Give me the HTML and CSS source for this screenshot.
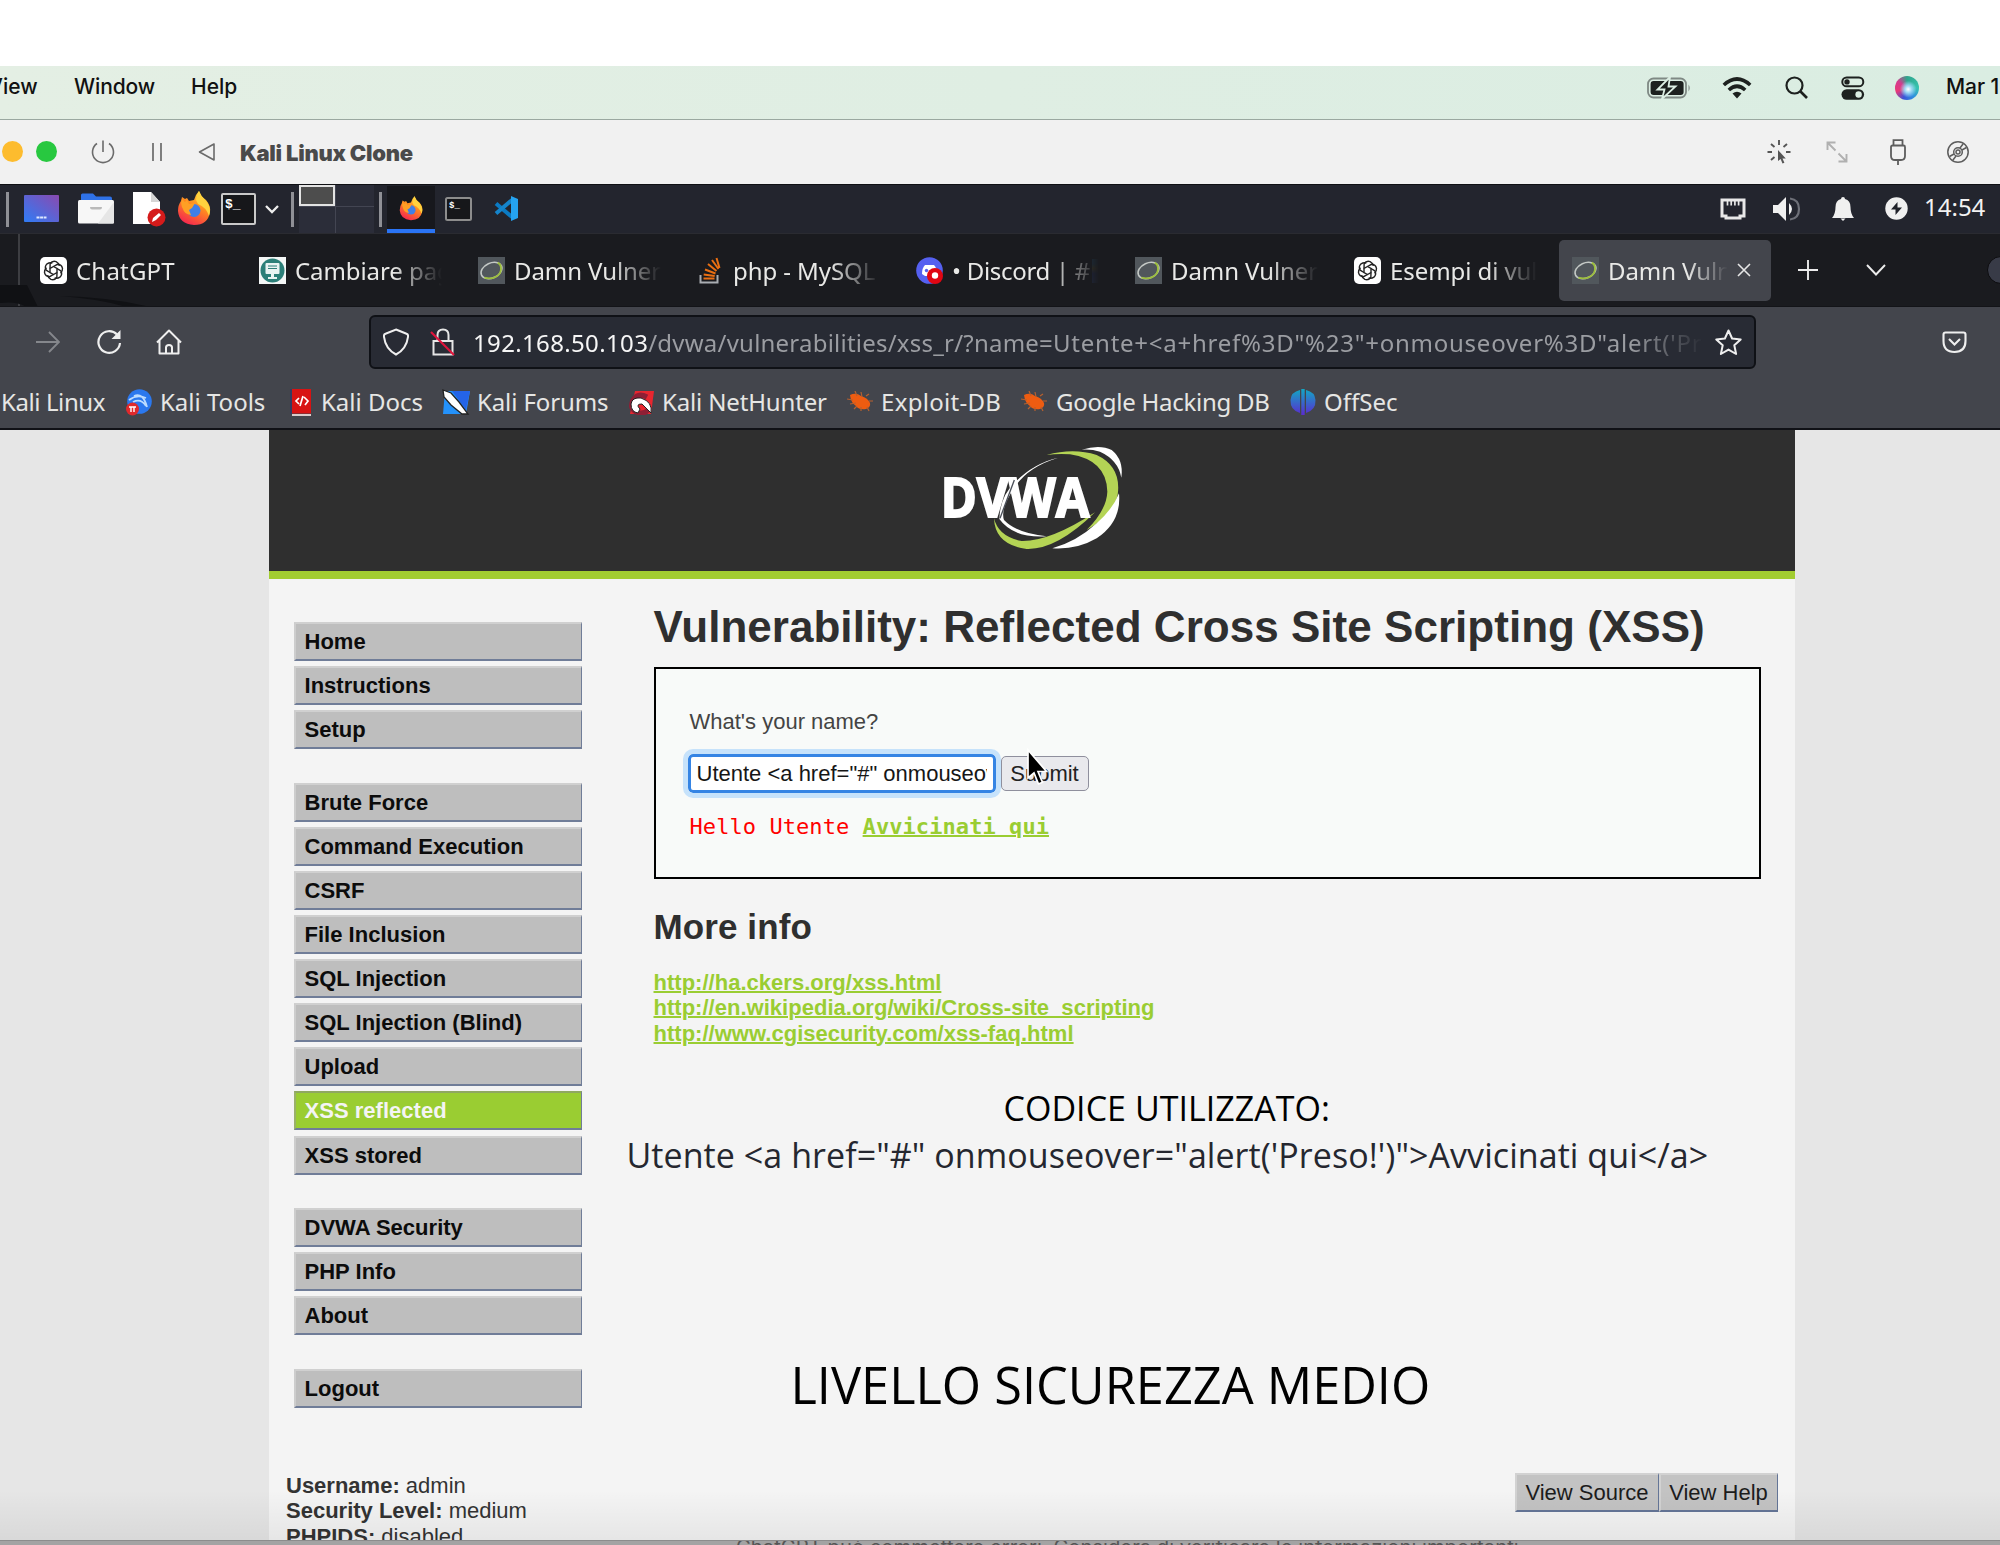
FILE: index.html
```html
<!DOCTYPE html>
<html lang="it">
<head>
<meta charset="utf-8">
<title>Kali Linux Clone</title>
<link rel="stylesheet" href="styles.css">
</head>
<body>
<svg width="0" height="0" class="defs">
  <defs>
    <linearGradient id="flame" x1=".8" y1="0" x2=".3" y2="1"><stop offset="0" stop-color="#ffe23d"/><stop offset=".45" stop-color="#ff8a1f"/><stop offset="1" stop-color="#f5264f"/></linearGradient>
    <linearGradient id="desk" x1="0" y1="1" x2="1" y2="0"><stop offset="0" stop-color="#2f7cf6"/><stop offset="1" stop-color="#8a4ab0"/></linearGradient>
    <linearGradient id="off" x1="0" y1="0" x2="0" y2="1"><stop offset="0" stop-color="#12a8c4"/><stop offset="1" stop-color="#5a2bd0"/></linearGradient>
    <symbol id="firefox" viewBox="0 0 34 35"><path d="M4 10L5 6l3 2 2-1 2 3 5-1 2-5 3-4 2 5 5 4q5 6 4 12-2 13-16 13Q2 33 1 20q0-6 3-10z" fill="url(#flame)"/><path d="M19 9Q19 4 22 0q2 5 7 10 6 7 3 15-3-9-11-12z" fill="#ffd23e"/><circle cx="17" cy="19.500" r="6.500" fill="#3f7fe8"/><path d="M5 8l3 3 2-2 2 4 6-1-3 5-3 2 2 5q-7-1-8-6-3-5-1-10z" fill="#ff9f24"/></symbol>
    <symbol id="gpt" viewBox="0 0 27 27"><rect width="27" height="27" rx="5" fill="#fff"/><g fill="none" stroke="#222" stroke-width="1.400"><path d="M13.500 9.500l4-2.200q4 0 5 4 .2 3-2 5"/><path d="M13.500 9.500l4-2.200q4 0 5 4 .2 3-2 5" transform="rotate(60 13.500 13.500)"/><path d="M13.500 9.500l4-2.200q4 0 5 4 .2 3-2 5" transform="rotate(120 13.500 13.500)"/><path d="M13.500 9.500l4-2.200q4 0 5 4 .2 3-2 5" transform="rotate(180 13.500 13.500)"/><path d="M13.500 9.500l4-2.200q4 0 5 4 .2 3-2 5" transform="rotate(240 13.500 13.500)"/><path d="M13.500 9.500l4-2.200q4 0 5 4 .2 3-2 5" transform="rotate(300 13.500 13.500)"/><path d="M13.500 9.500l3.500 2v4l-3.500 2-3.500-2v-4z"/></g></symbol>
    <symbol id="dvwa" viewBox="0 0 27 27"><rect width="27" height="27" fill="#51575c"/><g fill="none" transform="rotate(-25 13.500 13.500)"><ellipse cx="13.500" cy="13.500" rx="11" ry="7.500" stroke="#c4c9c6" stroke-width="1.500"/><path d="M4 17Q12 23.500 20 19.500 26 14 22.500 9" stroke="#9dbf3c" stroke-width="1.800"/></g></symbol>
    <symbol id="bug" viewBox="0 0 26 22"><path d="M3 4Q9 1 14 5q7 2 9 7 1 4-4 6-7 1-10-3Q4 12 3 4z" fill="#ee5c11"/><path d="M0 8l6 1M3 13l6-1M8 0l2 5M14 1l1 5M19 5l3-2M22 10l4 0M10 15l-3 3M14 16l0 4M20 16l2 4" stroke="#b8602e" stroke-width="1.200"/></symbol>
  </defs>
</svg>

<div class="screen">
  <div class="menubar">
    <span class="mb-view">View</span><span class="mb-window">Window</span><span class="mb-help">Help</span>
    <svg class="mb-battery" width="44" height="24" viewBox="0 0 44 24"><rect x="1" y="2.500" width="38" height="19" rx="5.500" fill="none" stroke="#7f8984" stroke-width="1.800"/><rect x="3.600" y="5" width="33" height="14" rx="3" fill="#1d211f"/><path d="M41.500 8.500q2.500 3.500 0 7z" fill="#7f8984"/><path d="M23 1L10.500 13.500h7L15 23 28.500 10.500h-7z" fill="#1d211f" stroke="#dceee3" stroke-width="1.800"/></svg>
    <svg class="mb-wifi" width="30" height="22" viewBox="0 0 30 22"><g fill="none" stroke="#1d211f" stroke-width="3.600"><path d="M1.800 8Q15-4 28.200 8"/><path d="M6.800 13Q15 5.500 23.200 13"/></g><path d="M15 21.500l-4.500-5q4.500-3.500 9 0z" fill="#1d211f"/></svg>
    <svg class="mb-search" width="23" height="23" viewBox="0 0 23 23"><g fill="none" stroke="#1d211f" stroke-width="2.200"><circle cx="9.500" cy="9.500" r="8"/><path d="M15 15l7 7" stroke-width="2.600"/></g></svg>
    <svg class="mb-control" width="24" height="24" viewBox="0 0 24 24"><rect x="1.300" y="1.500" width="21" height="8.800" rx="4.400" fill="none" stroke="#1d211f" stroke-width="2"/><circle cx="6" cy="5.900" r="2.700" fill="#1d211f"/><rect x=".5" y="13.300" width="22.600" height="10.400" rx="5.200" fill="#1d211f"/><circle cx="17.600" cy="18.500" r="3.200" fill="#dceee3"/></svg>
    <span class="mb-siri"></span>
    <span class="mb-date">Mar 15</span>
  </div>

  <div class="titlebar">
    <span class="dot yellow"></span><span class="dot green"></span>
    <svg class="tb-power" width="24" height="24" viewBox="0 0 24 24"><g fill="none" stroke="#6b6b6b" stroke-width="1.600"><path d="M6 3.500A10.500 10.500 0 1 0 18 3.500"/><path d="M12 .5V12"/></g></svg>
    <svg class="tb-pause" width="12" height="20" viewBox="0 0 12 20"><path d="M2 1v18M10 1v18" stroke="#6b6b6b" stroke-width="1.700"/></svg>
    <svg class="tb-back" width="18" height="20" viewBox="0 0 18 20"><path d="M16 2v16L1.500 10z" fill="none" stroke="#6b6b6b" stroke-width="1.600" stroke-linejoin="round"/></svg>
    <b class="tb-title">Kali Linux Clone</b>
    <svg class="tb-click" width="24" height="24" viewBox="0 0 24 24"><path d="M12 0v5M4 4l3.500 3M20 4l-3.500 3M.5 12H5M19 12h4.500M4 20l3.500-3" stroke="#555" stroke-width="1.900"/><path d="M11 10v11l2.600-2 1.900 4.500 1.900-.8-1.900-4.200h3.300z" fill="#555"/></svg>
    <svg class="tb-resize" width="22" height="22" viewBox="0 0 22 22"><path d="M1.500 9V1.500h8M1.500 1.500l8 8M20.500 13v7.500h-8M20.500 20.500l-8-8" fill="none" stroke="#b0b0b0" stroke-width="1.900"/></svg>
    <svg class="tb-usb" width="16" height="26" viewBox="0 0 16 26"><path d="M3.500 7V1.200h9V7M8 21v5M2.500 6.500h11q1.500 0 1.500 1.500v9q0 4-4 4H5q-4 0-4-4V8q0-1.500 1.500-1.500z" fill="none" stroke="#5d5d5d" stroke-width="1.800"/></svg>
    <svg class="tb-disc" width="22" height="22" viewBox="0 0 22 22"><g fill="none" stroke="#5d5d5d" stroke-width="1.500"><circle cx="11" cy="11" r="10.200"/><circle cx="11" cy="11" r="4.300"/><circle cx="11" cy="11" r="2"/><path d="M13 7l3-4M15 9l4.500-2.500M9 15l-3 4M7 13l-4.500 2.500"/></g></svg>
  </div>

  <div class="panel">
    <span class="sep s1"></span>
    <svg class="p-desk" width="35" height="27" viewBox="0 0 35 27"><rect width="35" height="27" rx="1" fill="url(#desk)"/><path d="M12.500 22.500h10" stroke="#dfe8ff" stroke-width="2" stroke-dasharray="3 .6"/></svg>
    <svg class="p-folder" width="36" height="31" viewBox="0 0 36 31"><path d="M3 8V2q0-1.500 1.500-1.500H15l3 3h14q2 0 2 2V8z" fill="#2f72e8"/><rect y="7" width="36" height="23.500" rx="1.500" fill="#f7f7f7"/><path d="M36 9v20.500q0 1-1 1H20z" fill="#e6e6e6"/><path d="M12 14q0 2.500 2 2.500h8q2 0 2-2.500z" fill="#b9b9b9"/></svg>
    <svg class="p-file" width="33" height="36" viewBox="0 0 33 36"><path d="M0 1h18l9 10v22H0z" fill="#fff"/><path d="M18 1v10h9z" fill="#d5d5d5"/><circle cx="23.500" cy="26.500" r="9" fill="#d51b1b"/><path d="M19 31l1-4 6-5 2 2-5 5z" fill="#fff"/></svg>
    <svg class="p-fox" width="34" height="35"><use href="#firefox"/></svg>
    <svg class="p-term" width="35" height="32" viewBox="0 0 35 32"><rect x="1" y="1" width="33" height="30" rx="1" fill="#16171a" stroke="#c9c9c9" stroke-width="2"/><text x="4" y="15" class="prompt">$_</text></svg>
    <svg class="p-chev" width="14" height="10" viewBox="0 0 14 10"><path d="M1 2l6 6 6-6" fill="none" stroke="#eee" stroke-width="2.300"/></svg>
    <span class="sep s2"></span>
    <span class="pager"><i class="on"></i><i></i><i></i><i></i></span>
    <span class="sep s3"></span>
    <span class="p-active"><svg width="24" height="25"><use href="#firefox"/></svg></span>
    <svg class="p-term2" width="27" height="24" viewBox="0 0 27 24"><rect x="1" y="1" width="25" height="22" rx="1.500" fill="#16171a" stroke="#8d8d8d" stroke-width="2"/><text x="4" y="11" class="prompt small">$_</text></svg>
    <svg class="p-code" width="24" height="25" viewBox="0 0 24 25"><path d="M2 7.500L18 21" stroke="#0b7bc4" stroke-width="4"/><path d="M2 17.500L18 4" stroke="#1585cc" stroke-width="4"/><path d="M17 0l7 3v19l-7 3z" fill="#25a3f0"/></svg>
    <svg class="p-eth" width="26" height="22" viewBox="0 0 26 22"><path d="M2 2h22v16h-4v2H6v-2H2z" fill="none" stroke="#e8e8e8" stroke-width="3"/><path d="M7.500 2v5.500M11.200 2v5.500M14.900 2v5.500M18.600 2v5.500" stroke="#e8e8e8" stroke-width="1.700"/></svg>
    <svg class="p-vol" width="28" height="24" viewBox="0 0 28 24"><path d="M0 8h5l8-8v24l-8-8H0z" fill="#f0f0f0"/><path d="M16 6q6 6 0 12z" fill="#f0f0f0"/><path d="M17 1.500q9 1 9 10.500t-9 10.500" fill="none" stroke="#6e7078" stroke-width="2.200"/></svg>
    <svg class="p-bell" width="22" height="24" viewBox="0 0 22 24"><path d="M11 0q2 0 2 2 5.500 1.500 5.500 8 0 7 3.500 11H0q3.500-4 3.500-11Q3.500 3.500 9 2q0-2 2-2z" fill="#f0f0f0"/><path d="M8.500 21.500h5L11 24z" fill="#f0f0f0"/></svg>
    <svg class="p-pow" width="23" height="23" viewBox="0 0 23 23"><circle cx="11.500" cy="11.500" r="11.200" fill="#f0f0f0"/><path d="M12.500 5L6 12.500h4.500L10.500 18 17 10.500h-4.500z" fill="#21232b"/></svg>
    <span class="clock">14:54</span>
  </div>

  <div class="tabs">
    <span class="pin"><svg width="150" height="40" viewBox="0 0 150 40"><path d="M0 18h27l11 22H26Q18 34 0 36zM60 29q50 1 90 11h-24Q100 32 60 29z" fill="#101114"/></svg></span>
    <div class="tab"><svg width="27" height="27"><use href="#gpt"/></svg><span class="wide">ChatGPT</span></div>
    <div class="tab"><svg width="27" height="27" viewBox="0 0 27 27"><rect width="27" height="27" fill="#f4f7f6"/><circle cx="13.500" cy="13.500" r="12" fill="#2c7f78"/><rect x="6.500" y="6" width="14" height="11" rx="1" fill="#e9f3f2"/><path d="M9 9h9M9 11.500h9" stroke="#2c7f78"/><path d="M12 17h3v3h3v2H9v-2h3z" fill="#e9f3f2"/></svg><span>Cambiare pagina</span></div>
    <div class="tab"><svg width="27" height="27"><use href="#dvwa"/></svg><span>Damn Vulnerable</span></div>
    <div class="tab"><svg width="27" height="27" viewBox="0 0 27 27"><path d="M3.500 18v7.500h17V18" fill="none" stroke="#a9adb2" stroke-width="2"/><path d="M6.500 21.500h11M6.700 17.500l11 1.500M8 12.500l10.500 4M11 7l8.500 7M15 3l6.500 9M19.500 1l3 10" stroke="#ea6f12" stroke-width="2"/></svg><span>php - MySQL</span></div>
    <div class="tab"><svg width="27" height="27" viewBox="0 0 27 27"><circle cx="13.500" cy="13.500" r="13.300" fill="#5560f0"/><path d="M6 17q0-6 3-9h9q3 3 3 9l-4 2H9z" fill="#fff"/><circle cx="10.500" cy="13.500" r="1.700" fill="#5560f0"/><circle cx="19" cy="19" r="8" fill="#e00612"/><circle cx="19" cy="18.500" r="3.200" fill="#fff"/></svg><span class="discord">• Discord | #<i></i></span></div>
    <div class="tab"><svg width="27" height="27"><use href="#dvwa"/></svg><span>Damn Vulnerable</span></div>
    <div class="tab"><svg width="27" height="27"><use href="#gpt"/></svg><span>Esempi di vulne</span></div>
    <div class="tab current"><svg width="27" height="27"><use href="#dvwa"/></svg><span>Damn Vulnerable</span><svg class="x" width="14" height="14" viewBox="0 0 14 14"><path d="M1 1l12 12M13 1L1 13" stroke="#e6e6e6" stroke-width="1.600"/></svg></div>
    <svg class="t-plus" width="20" height="20" viewBox="0 0 20 20"><path d="M10 0v20M0 10h20" stroke="#ececec" stroke-width="1.900"/></svg>
    <svg class="t-chev" width="20" height="12" viewBox="0 0 20 12"><path d="M1 1l9 9.500L19 1" fill="none" stroke="#ececec" stroke-width="1.900"/></svg>
    <span class="t-round"></span>
  </div>

  <div class="nav">
    <svg class="n-fwd" width="24" height="26" viewBox="0 0 24 26"><path d="M0 13h22M13 3l10 10-10 10" fill="none" stroke="#85878c" stroke-width="1.900"/></svg>
    <svg class="n-reload" width="26" height="26" viewBox="0 0 26 26"><path d="M21 5.500A10.800 10.800 0 1 0 24 14" fill="none" stroke="#efefef" stroke-width="2.200"/><path d="M24.500 1v9h-9z" fill="#efefef"/></svg>
    <svg class="n-home" width="26" height="26" viewBox="0 0 26 26"><path d="M1 13.500L13 1.500l12 12M3.500 11.500v13h19v-13M10 24.500v-6q0-2.500 3-2.500t3 2.500v6" fill="none" stroke="#efefef" stroke-width="2" stroke-linejoin="round"/></svg>
    <div class="url">
      <svg class="u-shield" width="26" height="28" viewBox="0 0 26 28"><path d="M13 1.500l10.500 4.300q2 .7 1.500 3-1.500 12-12 17.700Q2.500 20.800 1 8.800q-.5-2.300 1.500-3z" fill="none" stroke="#efefef" stroke-width="2"/></svg>
      <svg class="u-lock" width="26" height="28" viewBox="0 0 26 28"><path d="M7.500 13V7q0-5.500 5.500-5.500T18.500 7v6M3.500 13h19v13.500h-19z" fill="none" stroke="#e6e6e6" stroke-width="2"/><path d="M1 4l23 23" stroke="#e0143c" stroke-width="2.200"/></svg>
      <span class="u-text"><b>192.168.50.103</b>/dvwa/vulnerabilities/xss_r/?name=<i>Utente+&lt;a+href%3D"%23"+onmouseover%3D"alert('Preso</i></span>
      <svg class="u-star" width="27" height="27" viewBox="0 0 27 27"><path d="M13.500 1.500l3.600 8 8.600.9-6.400 5.900 1.800 8.700-7.600-4.400-7.600 4.400 1.800-8.700-6.400-5.900 8.600-.9z" fill="none" stroke="#efefef" stroke-width="2" stroke-linejoin="round"/></svg>
    </div>
    <svg class="n-pocket" width="25" height="23" viewBox="0 0 25 23"><path d="M3.500 1.500h18q2 0 2 2V10q0 11-11 11T1.500 10V3.500q0-2 2-2zM7 8l5.500 5.500L18 8" fill="none" stroke="#efefef" stroke-width="2.100"/></svg>
  </div>

  <div class="bookmarks">
    <span class="b0">Kali Linux</span>
    <svg width="26" height="27" viewBox="0 0 26 27"><circle cx="13.500" cy="12.500" r="12.300" fill="#2b78ee"/><path d="M3 11q8-6 17-2M8 7q9-4 13 11M7 13q8-4 13 4" fill="none" stroke="#bcdcff" stroke-width="1.800"/><circle cx="6.500" cy="20" r="6.500" fill="#e0292c"/><path d="M3 18h7M5 18v5M8 18v5" stroke="#fff" stroke-width="1.400"/></svg><span class="b1">Kali Tools</span>
    <svg width="26" height="27" viewBox="0 0 26 27"><path d="M3 0h19v24.500H3z" fill="#d81313"/><path d="M3 25h19v2H3z" fill="#d8cccc"/><path d="M2 0v25" stroke="#333a66" stroke-width="1.600"/><path d="M10 9l-3 3 3 3M15 8l4 4-3 4M14 7l-3 10" fill="none" stroke="#fff" stroke-width="1.700"/></svg><span class="b2">Kali Docs</span>
    <svg width="28" height="26" viewBox="0 0 28 26"><path d="M3 2h25l-4 23H1z" fill="#2492fb"/><path d="M10 2h18l-4 19z" fill="#2464e8"/><path d="M1 1l8 3 8 9 9 12h-6L9 16 2 8z" fill="#fff" stroke="#222" stroke-width="1.300"/></svg><span class="b3">Kali Forums</span>
    <svg width="27" height="25" viewBox="0 0 27 25"><path d="M8 1h19l-3 23H3z" fill="#e8262f"/><path d="M20 7q-9-5-14 3-4 8 3 12 8 3 12-2" fill="none" stroke="#8e1f35" stroke-width="5"/><path d="M14 8q-9-1-10 6 0 8 7 9l2-4q-5-5 2-5l9 9q2-11-10-15z" fill="#fff" stroke="#222"/></svg><span class="b4">Kali NetHunter</span>
    <svg width="26" height="22"><use href="#bug"/></svg><span class="b5">Exploit-DB</span>
    <svg width="26" height="22"><use href="#bug"/></svg><span class="b6">Google Hacking DB</span>
    <svg width="26" height="26" viewBox="0 0 26 26"><path d="M10 1v23Q0 21 .5 11 1 3 10 1zM16 1v23q10-3 9.500-13Q25 3 16 1zM11.300 0h3.400v26h-3.400z" fill="url(#off)"/></svg><span class="b7">OffSec</span>
  </div>

  <div class="page">
    <div class="site">
      <header>
        <svg class="logo" width="260" height="141" viewBox="0 15 780 423">
          <path d="M475 98Q385 125 345 185 300 250 312 285 350 325 440 334 340 340 298 282 300 215 345 172 400 115 475 98z" fill="#fff"/>
          <path d="M440 90Q520 68 590 90 665 125 653 210 640 270 560 315 620 255 622 200 620 105 510 88 470 86 440 90z" fill="#b4d455"/>
          <path d="M282 280Q295 335 365 348 450 350 585 262 470 375 380 372 285 360 282 280z" fill="#b4d455"/>
          <path d="M545 74Q600 58 635 75 672 105 664 158 655 105 600 80 575 72 545 74z" fill="#fff"/>
          <path d="M657 205Q665 290 590 340 530 375 457 370 530 350 590 295 640 250 657 205z" fill="#fff"/>
          <text x="122" y="275" textLength="446" lengthAdjust="spacingAndGlyphs" class="logo-text">DVWA</text>
          <path d="M343 165L300 280" stroke="#4a4f58" stroke-width="4"/>
        </svg>
      </header>
      <div class="body">
        <nav class="side">
          <ul><li>Home</li><li>Instructions</li><li>Setup</li></ul>
          <ul><li>Brute Force</li><li>Command Execution</li><li>CSRF</li><li>File Inclusion</li><li>SQL Injection</li><li>SQL Injection (Blind)</li><li>Upload</li><li class="sel">XSS reflected</li><li>XSS stored</li></ul>
          <ul><li>DVWA Security</li><li>PHP Info</li><li>About</li></ul>
          <ul><li>Logout</li></ul>
        </nav>
        <main>
          <h1>Vulnerability: Reflected Cross Site Scripting (XSS)</h1>
          <div class="box">
            <p>What's your name?</p>
            <div class="form">
              <div class="field"><span>Utente &lt;a href="#" onmouseover=</span></div>
              <div class="submit">Submit</div>
              <svg class="cursor" width="24" height="40" viewBox="0 0 24 40"><path d="M2 2v28l6-5 4.500 11 4-1.700L12 23.500h8.500z" fill="#000" stroke="#fff" stroke-width="1.700"/></svg>
            </div>
            <pre>Hello Utente <a>Avvicinati qui</a></pre>
          </div>
          <h2>More info</h2>
          <div class="links"><a>http://ha.ckers.org/xss.html</a><a>http://en.wikipedia.org/wiki/Cross-site_scripting</a><a>http://www.cgisecurity.com/xss-faq.html</a></div>
          <div class="note1">CODICE UTILIZZATO:</div>
          <div class="note2">Utente &lt;a href="#" onmouseover="alert('Preso!')"&gt;Avvicinati qui&lt;/a&gt;</div>
          <div class="note3">LIVELLO SICUREZZA MEDIO</div>
        </main>
      </div>
      <footer>
        <div class="info"><div><b>Username:</b> admin</div><div><b>Security Level:</b> medium</div><div><b>PHPIDS:</b> disabled</div></div>
        <div class="btns"><span class="vs">View Source</span><span class="vh">View Help</span></div>
      </footer>
    </div>
    <div class="shade"></div>
  </div>
  <div class="strip"><span>ChatGPT può commettere errori. Considera di verificare le informazioni importanti.</span></div>
</div>
</body>
</html>
```
FILE: styles.css
```css
* { box-sizing: border-box; }
body { margin: 0; background: #fff; }
.defs { position: absolute; }
.screen { width: 2000px; height: 1545px; padding-top: 66px; overflow: hidden; display: flex; flex-direction: column; }
.screen svg { display: block; flex: none; }
.screen span { flex: none; white-space: nowrap; }

.menubar { height: 54px; flex: none; display: flex; align-items: center; padding-bottom: 10px; background: linear-gradient(90deg, #e4efe4, #daede2); border-bottom: 1px solid #9aa8a0; font: 500 21px/26px Inter, sans-serif; color: #111; overflow: hidden; }
.menubar span { margin-top: -1px; }
.mb-view { width: 48px; margin-left: -12px; }
.mb-window { width: 80px; margin-left: 38px; letter-spacing: -.1px; }
.mb-help { width: 46px; margin-left: 37px; }
.mb-battery { margin-left: 1410px; }
.mb-wifi { margin-left: 31px; }
.mb-search { margin-left: 33px; }
.mb-control { margin-left: 33px; }
.menubar .mb-siri { width: 24px; height: 24px; margin: 0 0 0 30px; border-radius: 50%; background: radial-gradient(circle at 55% 55%, #fff 0, #9fd8f5 18%, transparent 45%), conic-gradient(#2fa58c, #37c4b0 25%, #2f8fe0 40%, #3a55d8 55%, #e83a78 70%, #d43b8e 85%, #2fa58c); }
.mb-date { margin-left: 27px; letter-spacing: -.1px; }

.titlebar { height: 64px; flex: none; display: flex; align-items: center; padding-bottom: 1px; background: #f1f1f1; overflow: hidden; font: 700 22px/28px Inter, sans-serif; letter-spacing: -.25px; color: #4a4a4a; }
.dot { width: 21px; height: 21px; border-radius: 50%; }
.yellow { background: #fdbc2e; margin-left: 2px; }
.green { background: #28c840; margin-left: 13px; }
.tb-power { margin-left: 34px; }
.tb-pause { margin-left: 36px; }
.tb-back { margin-left: 35px; }
.tb-title { margin-left: 24px; width: 174px; white-space: nowrap; margin-top: 2px; }
.tb-click { margin-left: 1353px; }
.tb-resize { margin-left: 35px; }
.tb-usb { margin-left: 42px; }
.tb-disc { margin-left: 41px; }

.panel { height: 50px; flex: none; display: flex; align-items: center; background: #23252e; border-top: 1px solid #0f1014; border-bottom: 1px solid #2a2b31; font-family: "Noto Sans", sans-serif; }
.panel > svg { margin-top: -1px; }
.sep { width: 3px; height: 35px; background: #8f9096; }
.s1 { margin-left: 6px; }
.p-desk { margin-left: 15px; }
.p-folder { margin-left: 19px; }
.p-file { margin-left: 19px; }
.p-fox { margin-left: 11px; }
.p-term { margin-left: 10px; }
.p-chev { margin-left: 9px; }
.s2 { margin-left: 12px; }
.prompt { font: 700 13px "Liberation Mono", monospace; fill: #fff; }
.prompt.small { font-size: 9px; }
.pager { width: 75px; height: 48px; margin-left: 5px; display: grid; grid-template-columns: 36px 38px; grid-template-rows: 21px 26px; gap: 1px; background: #434552; }
.pager i { background: #2b2d39; }
.pager i.on { background: #4d4d4d; border: 2px solid #e3e3e3; }
.s3 { margin-left: 5px; }
.p-active { width: 48px; height: 47px; margin-left: 5px; background: #17181d; border-bottom: 4px solid #2a74f5; display: flex; align-items: center; justify-content: center; padding-top: 3px; }
.p-term2 { margin-left: 10px; }
.p-code { margin-left: 22px; }
.p-eth { margin-left: 1202px; }
.p-vol { margin-left: 27px; }
.p-bell { margin-left: 31px; }
.p-pow { margin-left: 31px; }
.clock { margin-left: 16px; margin-top: -4px; font-size: 24px; line-height: 30px; color: #f2f2f2; }

.tabs { height: 73px; flex: none; display: flex; align-items: center; background: #1a1b1f; border-bottom: 1px solid #131418; overflow: hidden; font: 24px/34px "Noto Sans", sans-serif; color: #e9e9e7; }
.pin { width: 20px; height: 73px; border-right: 2px solid #3d3e42; margin-right: 10px; overflow: visible; padding-top: 33px; }
.tab { width: 212px; height: 61px; flex: none; margin-right: 7px; padding-left: 10px; display: flex; align-items: center; border-radius: 5px; }
.tab span { margin: 2px 0 0 9px; width: 150px; overflow: hidden; -webkit-mask-image: linear-gradient(90deg, #000 65%, transparent 98%); mask-image: linear-gradient(90deg, #000 65%, transparent 98%); letter-spacing: -.08px; }
.tab span.wide { letter-spacing: .2px; }
.tab span.discord { letter-spacing: -.3px; }
.discord i { display: inline-block; width: 18px; height: 24px; margin-left: 2px; vertical-align: -3px; background: linear-gradient(#2c6f9c 20%, #8a7a30 40%, #2c3f9c 60%, #3b55a0); }
.tab.current { background: #43454c; margin: 0 0 0 -4px; padding-left: 13px; }
.tab.current span { width: 122px; }
.tab .x { margin-left: 7px; }
.t-plus { margin-left: 27px; }
.t-chev { margin-left: 48px; }
.t-round { width: 28px; height: 28px; margin-left: 101px; border-radius: 50%; background: #383b47; border: 1px solid #0c0c0e; }

.nav { height: 67px; flex: none; display: flex; align-items: center; background: #43454c; padding-top: 3px; overflow: hidden; }
.n-fwd { margin-left: 36px; }
.n-reload { margin-left: 36px; }
.n-home { margin-left: 34px; }
.url { width: 1387px; height: 54px; flex: none; margin-left: 187px; border: 2px solid #0f1116; border-radius: 6px; background: #282b34; display: flex; align-items: center; }
.u-shield { margin-left: 12px; }
.u-lock { margin-left: 21px; }
.u-text { margin: 1px 0 0 17px; width: 1230px; overflow: hidden; font: 24px/36px "Noto Sans", sans-serif; letter-spacing: .22px; color: #9b9da2; -webkit-mask-image: linear-gradient(90deg, #000 94%, transparent 100%); mask-image: linear-gradient(90deg, #000 94%, transparent 100%); }
.u-text b { font-weight: 400; letter-spacing: .35px; color: #f6f6f6; }
.u-text i { font-style: normal; letter-spacing: .75px; }
.u-star { margin-left: 12px; }
.n-pocket { margin-left: 186px; }

.bookmarks { height: 56px; flex: none; display: flex; align-items: center; background: #43454c; border-bottom: 2px solid #101116; font: 24px/34px "Noto Sans", sans-serif; color: #e6e6e4; }
.bookmarks span { padding-top: 2px; }
.bookmarks svg { margin-top: 2px; }
.b0 { width: 105px; margin: 0 20px 0 1px; letter-spacing: -.4px; }
.b1 { width: 106px; margin: 0 23px 0 8px; }
.b2 { width: 100px; margin: 0 21px 0 6px; }
.b3 { width: 129px; margin: 0 21px 0 7px; letter-spacing: -.1px; }
.b4 { width: 164px; margin: 0 21px 0 8px; letter-spacing: -.15px; }
.b5 { width: 120px; margin: 0 20px 0 8px; letter-spacing: .3px; }
.b6 { width: 212px; margin: 0 22px 0 9px; letter-spacing: -.25px; }
.b7 { margin-left: 8px; }

.page { position: relative; height: 1110px; flex: none; background: #e6e6e6; overflow: hidden; padding-left: 269px; font: 22px/25.500px "Liberation Sans", Arial, sans-serif; color: #333; }
.site { width: 1526px; height: 1110px; background: #f4f4f4; display: flex; flex-direction: column; }
header { height: 149px; flex: none; background: #2f2f2f; border-bottom: 8px solid #a2cd31; }
.logo { margin-left: 631px; }
.logo-text { font: 700 162px "Open Sans", "Noto Sans", sans-serif; fill: #fff; stroke: #fff; stroke-width: 6px; }
.body { height: 893px; flex: none; display: flex; }
.side { width: 384.500px; flex: none; padding: 43px 0 0 25px; }
.side ul { list-style: none; margin: 0 0 33.600px; padding: 0; display: flex; flex-direction: column; gap: 5.100px; }
.side li { width: 288px; height: 39px; padding-left: 8.500px; line-height: 35.500px; font-weight: 700; letter-spacing: .02px; color: #0c0c0c; background: #bebebe; border: 2px solid; border-color: #d0d0d0 #707d98 #707d98 #cdcdcd; border-right-width: 1.500px; }
.side li.sel { background: #9acd32; color: #f4f4f4; border-top-color: #8fa860; border-left-color: #9ab06a; }
main { width: 1107px; flex: none; }
h1 { margin: 23px 0 15px; font-size: 44px; line-height: 50px; letter-spacing: .03px; white-space: nowrap; color: #2f2f2f; }
.box { height: 212px; border: 2px solid #000; background: #f8faf9; padding: 38.500px 0 0 34px; color: #444; }
.box p { margin: 0; line-height: 28px; }
.form { position: relative; display: flex; align-items: center; height: 39px; margin: 18.500px 0 0 -2px; }
.field { width: 308px; height: 39px; border: 3px solid #3584e4; border-radius: 5px; outline: 5px solid #c6e2fb; background: #fff; color: #161616; padding: 0 6px 0 6px; line-height: 33px; }
.field span { display: block; overflow: hidden; }
.submit { width: 88px; height: 35px; margin-left: 5px; border: 1.500px solid #8f8f9d; border-radius: 5px; background: #e9e9ed; text-align: center; line-height: 34px; color: #222; }
.cursor { position: absolute; left: 338px; top: -6px; }
pre { margin: 19px 0 0; font: 22px/30px "DejaVu Sans Mono", monospace; letter-spacing: .07px; color: #f00; }
a { color: #9acd32; font-weight: 700; text-decoration: underline; text-decoration-thickness: 2px; }
h2 { margin: 27px 0 21.600px; font-size: 35px; line-height: 42px; letter-spacing: .1px; color: #2f2f2f; }
.links { display: flex; flex-direction: column; align-items: flex-start; letter-spacing: .02px; }
.note1, .note2, .note3 { font-family: "Open Sans", "Noto Sans", sans-serif; color: #000; white-space: nowrap; line-height: 46px; }
.note1 { margin: 39.400px 0 0 350px; font-size: 34px; letter-spacing: .03px; }
.note2 { margin: 1px 0 0 -27px; font-size: 34px; letter-spacing: .06px; color: #25272f; }
.note3 { margin: 168.500px 0 0 137px; font-size: 50.500px; line-height: 76px; }
footer { height: 68px; flex: none; display: flex; justify-content: space-between; padding: 0 17.500px 0 17px; overflow: hidden; }
.info { white-space: nowrap; padding-top: .5px; }
.btns { display: flex; padding-top: 1px; color: #1c1c1c; }
.btns span { height: 39px; line-height: 35px; text-align: center; background: #c3c3c3; border: 2px solid; border-color: #d2d2d2 #647597 #647597 #d2d2d2; border-right-width: 1.500px; }
.vs { width: 144px; }
.vh { width: 119px; }
.shade { position: absolute; left: 0; right: 0; bottom: 0; height: 50px; background: linear-gradient(rgba(0, 0, 0, 0), rgba(0, 0, 0, .06)); }
.strip { height: 5px; flex: none; background: #a3a3a3; border-top: 1px solid #8c8c8c; overflow: hidden; padding-left: 736px; font: 20.250px/20px Inter, sans-serif; color: #555; }
.strip span { display: block; margin-top: -4px; }
```
